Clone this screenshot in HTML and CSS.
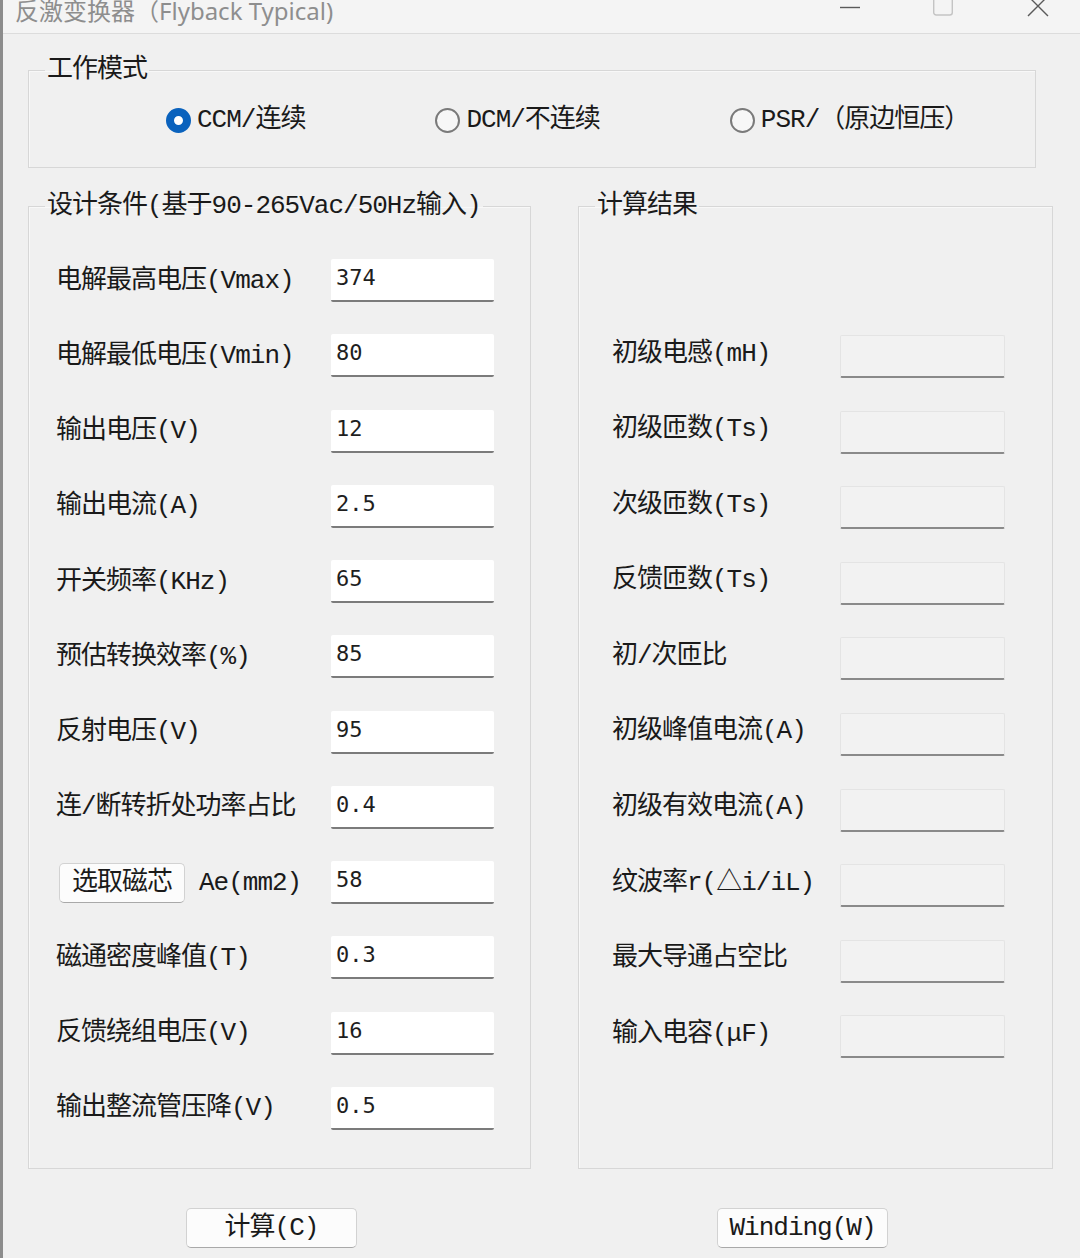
FILE: index.html
```html
<!DOCTYPE html>
<html lang="zh-CN">
<head>
<meta charset="utf-8">
<title>反激变换器（Flyback Typical)</title>
<link rel="stylesheet" href="styles.css">
</head>
<body>
<div class="window">
  <div class="titlebar">
    <span class="title">反激变换器（Flyback Typical)</span>
    <div class="controls">
      <svg class="ctl" viewBox="0 0 20 20" width="20" height="20"><path d="M0 7.5H20" stroke="#5a5a5a" stroke-width="1.4"/></svg>
      <svg class="ctl max" viewBox="0 0 20 20" width="20" height="20"><rect x="0.7" y="-8" width="18.6" height="23" rx="2.5" fill="none" stroke="#c4c4c4" stroke-width="1.4"/></svg>
      <svg class="ctl close" viewBox="0 0 20 20" width="20" height="20"><path d="M0 -4L20 16M20 -4L0 16" stroke="#5a5a5a" stroke-width="1.4"/></svg>
    </div>
  </div>

  <div class="content">
    <fieldset class="group mode">
      <legend>工作模式</legend>
      <div class="radios">
        <label class="radio"><span class="dot on"></span>CCM/连续</label>
        <label class="radio"><span class="dot"></span>DCM/不连续</label>
        <label class="radio"><span class="dot"></span>PSR/（原边恒压）</label>
      </div>
    </fieldset>

    <div class="columns">
      <fieldset class="group design">
        <legend>设计条件(基于90-265Vac/50Hz输入)</legend>
        <div class="rows left-rows">
          <div class="row"><span class="lbl">电解最高电压(Vmax)</span><div class="field">374</div></div>
          <div class="row"><span class="lbl">电解最低电压(Vmin)</span><div class="field">80</div></div>
          <div class="row"><span class="lbl">输出电压(V)</span><div class="field">12</div></div>
          <div class="row"><span class="lbl">输出电流(A)</span><div class="field">2.5</div></div>
          <div class="row"><span class="lbl">开关频率(KHz)</span><div class="field">65</div></div>
          <div class="row"><span class="lbl">预估转换效率(%)</span><div class="field">85</div></div>
          <div class="row"><span class="lbl">反射电压(V)</span><div class="field">95</div></div>
          <div class="row"><span class="lbl">连/断转折处功率占比</span><div class="field">0.4</div></div>
          <div class="row"><span class="lbl core"><button class="btn small">选取磁芯</button>Ae(mm2)</span><div class="field">58</div></div>
          <div class="row"><span class="lbl">磁通密度峰值(T)</span><div class="field">0.3</div></div>
          <div class="row"><span class="lbl">反馈绕组电压(V)</span><div class="field">16</div></div>
          <div class="row"><span class="lbl">输出整流管压降(V)</span><div class="field">0.5</div></div>
        </div>
      </fieldset>

      <fieldset class="group result">
        <legend>计算结果</legend>
        <div class="rows right-rows">
          <div class="row"><span class="lbl">初级电感(mH)</span><div class="out"></div></div>
          <div class="row"><span class="lbl">初级匝数(Ts)</span><div class="out"></div></div>
          <div class="row"><span class="lbl">次级匝数(Ts)</span><div class="out"></div></div>
          <div class="row"><span class="lbl">反馈匝数(Ts)</span><div class="out"></div></div>
          <div class="row"><span class="lbl">初/次匝比</span><div class="out"></div></div>
          <div class="row"><span class="lbl">初级峰值电流(A)</span><div class="out"></div></div>
          <div class="row"><span class="lbl">初级有效电流(A)</span><div class="out"></div></div>
          <div class="row"><span class="lbl">纹波率r(△i/iL)</span><div class="out"></div></div>
          <div class="row"><span class="lbl">最大导通占空比</span><div class="out"></div></div>
          <div class="row"><span class="lbl">输入电容(μF)</span><div class="out"></div></div>
        </div>
      </fieldset>
    </div>

    <div class="actions">
      <button class="btn big">计算(C)</button>
      <button class="btn big">Winding(W)</button>
    </div>
  </div>
</div>
</body>
</html>
```

FILE: styles.css
```css
html, body {
  margin: 0;
  padding: 0;
  background: #f0f0f0;
}

.window {
  width: 1080px;
  height: 1258px;
  box-sizing: border-box;
  border-left: 3px solid #8c8c8c;
  background: #f0f0f0;
  overflow: hidden;
  font-family: "Liberation Mono", "Noto Sans CJK SC", monospace;
  font-size: 26px;
  letter-spacing: -1px;
  color: #1a1a1a;
}

.titlebar {
  height: 33px;
  border-bottom: 1px solid #dcdcdc;
  background: #f4f4f4;
  display: flex;
  align-items: flex-start;
  overflow: hidden;
}

.title {
  font-family: "Noto Sans", "Noto Sans CJK SC", sans-serif;
  font-size: 24px;
  letter-spacing: 0;
  line-height: 24px;
  color: #8e8e8e;
  margin-top: -1px;
  margin-left: 12px;
  white-space: nowrap;
}

.controls {
  margin-left: auto;
  margin-right: 32px;
  display: flex;
  align-items: flex-start;
}

.ctl {
  display: block;
  overflow: visible;
}

.ctl.max { margin-left: 73px; }
.ctl.close { margin-left: 75px; }

.content {
  padding-left: 25px;
}

.group {
  margin: 0;
  padding: 0;
  min-width: 0;
  box-sizing: border-box;
  border: 1px solid #d7d7d7;
  box-shadow: inset 1px 1px 0 #f8f8f8;
}

.group legend {
  padding: 0 2px;
  margin-left: 16px;
  line-height: 26px;
  white-space: nowrap;
}

.mode {
  margin-top: 23px;
  width: 1008px;
}

.radios {
  display: flex;
  gap: 130px;
  height: 26px;
  align-items: center;
  padding: 24px 0 34px 137px;
}

.radio {
  display: flex;
  align-items: center;
  gap: 6px;
  white-space: nowrap;
  line-height: 26px;
}

.dot {
  width: 25px;
  height: 25px;
  box-sizing: border-box;
  border-radius: 50%;
  border: 2px solid #7a7a7a;
  background: #f7f7f7;
}

.dot.on {
  border: 8px solid #0a62bd;
  background: #ffffff;
}

.columns {
  display: flex;
  margin-top: 25px;
}

.design {
  width: 503px;
}

.result {
  width: 475px;
  margin-left: 47px;
}

.rows {
  display: grid;
}

.left-rows {
  row-gap: 32.27px;
  padding: 40px 0 38px 27px;
}

.right-rows {
  row-gap: 32.6px;
  padding: 116px 0 20px 33px;
}

.row {
  display: flex;
  align-items: center;
  height: 43px;
}

.left-rows .lbl { width: 275px; }
.right-rows .lbl { width: 228px; margin-top: -6px; }

.lbl {
  white-space: nowrap;
  line-height: 26px;
}

.lbl.core {
  display: flex;
  align-items: center;
  gap: 14px;
  margin-left: 3px;
  width: 272px;
}

.field {
  width: 163px;
  height: 43px;
  box-sizing: border-box;
  background: #ffffff;
  border-bottom: 2px solid #7b7b7b;
  border-radius: 2px;
  padding: 0 0 4px 5px;
  display: flex;
  align-items: center;
  font-family: "DejaVu Sans Mono", monospace;
  font-size: 22px;
  letter-spacing: 0;
  color: #1e1e1e;
}

.out {
  width: 165px;
  height: 43px;
  box-sizing: border-box;
  background: #f2f2f2;
  border: 1px solid #e4e4e4;
  border-bottom: 2px solid #8a8a8a;
  border-radius: 2px;
}

.btn {
  font: inherit;
  letter-spacing: -1px;
  color: #1a1a1a;
  background: #fcfcfc;
  border: 1px solid #d2d2d2;
  border-bottom-color: #a9a9a9;
  border-radius: 5px;
  padding: 0;
  line-height: 26px;
  cursor: default;
}

.btn.small {
  width: 126px;
  height: 40px;
  flex: none;
}

.actions {
  display: flex;
  gap: 360px;
  margin-top: 39px;
  padding-left: 158px;
}

.btn.big {
  width: 171px;
  height: 40px;
}
```
